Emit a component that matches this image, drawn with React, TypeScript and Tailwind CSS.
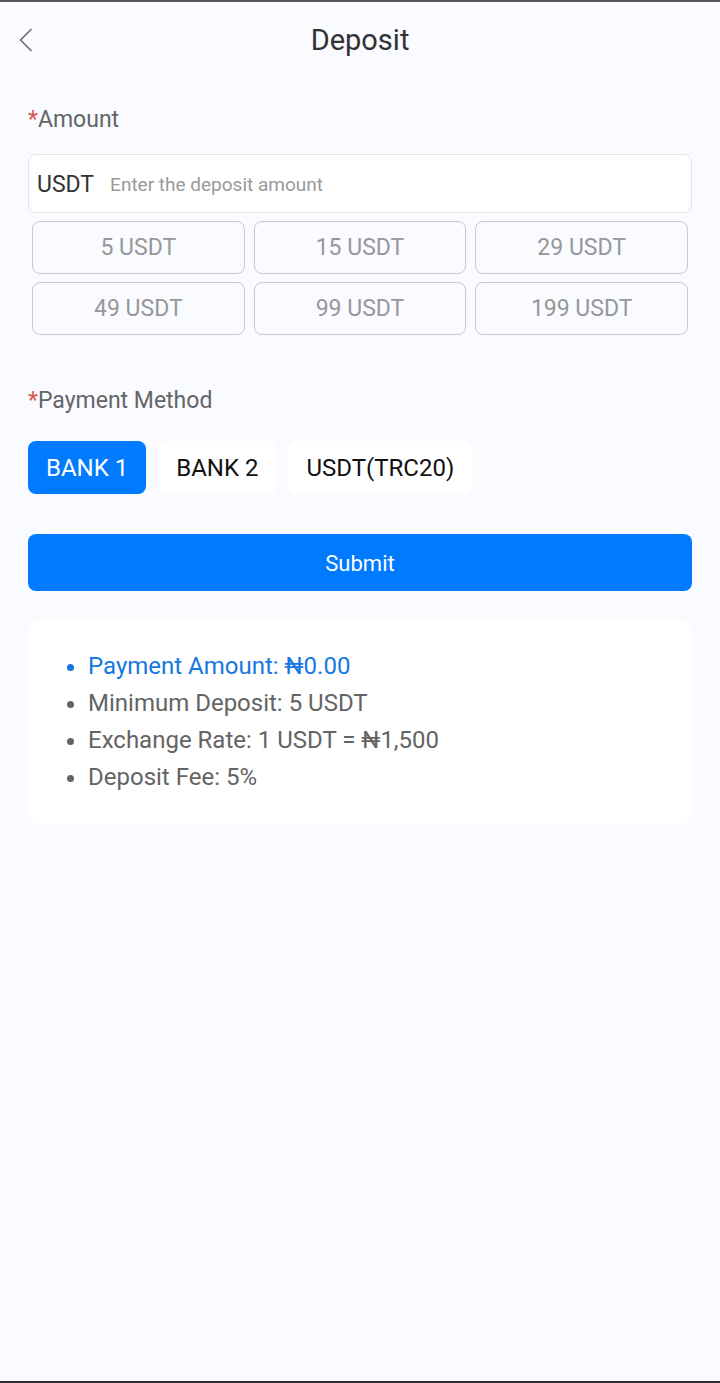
import React, { useState } from 'react';

const amounts = [5, 15, 29, 49, 99, 199];

const methods = ['BANK 1', 'BANK 2', 'USDT(TRC20)'];

const RATE = 1500;

const RequiredMark = () => <span className="text-[#d9534f]">*</span>;

const Header = () => (
  <header className="grid grid-cols-[60px_1fr_60px] items-center h-[76px]">
    <button type="button" aria-label="Back" className="h-full pl-[19px] text-[#5f6062]">
      <svg width="14" height="24" viewBox="0 0 14 24" fill="none" stroke="currentColor" strokeWidth="1.4">
        <path d="M12.5 1 1.5 12l11 11" />
      </svg>
    </button>
    <h1 className="text-center text-[29px] leading-10 text-[#323233]">Deposit</h1>
  </header>
);

const App = () => {
  const [amount, setAmount] = useState('');
  const [method, setMethod] = useState(methods[0]);

  const total = (Number(amount) || 0) * RATE;

  return (
    <div className="min-h-screen flex flex-col bg-[#fafbff] border-t-2 border-t-[#58585c] border-b-2 border-b-[#2b2b30] font-['Roboto','Noto_Sans',sans-serif]">
      <Header />

      <form className="px-7 pt-6" onSubmit={(e) => e.preventDefault()}>
        <label htmlFor="amount" className="block text-[23px] leading-9 text-[#646566]">
          <RequiredMark />Amount
        </label>

        <div className="mt-4 flex items-center gap-4 h-[59px] px-2 bg-white border border-[#e4e5ea] rounded-lg">
          <span className="pt-0.5 text-[23px] leading-9 text-[#323233]">USDT</span>
          <input
            id="amount"
            type="text"
            inputMode="decimal"
            value={amount}
            onChange={(e) => setAmount(e.target.value)}
            placeholder="Enter the deposit amount"
            className="flex-1 min-w-0 h-full pt-0.5 bg-transparent outline-none text-[19px] text-[#323233] placeholder:text-[#999999]"
          />
        </div>

        <div className="mt-2 px-1 grid grid-cols-3 gap-x-[9px] gap-y-2">
          {amounts.map((value) => (
            <button
              key={value}
              type="button"
              onClick={() => setAmount(String(value))}
              className="h-[53px] border border-[#c8c9cc] rounded-lg text-[23px] leading-9 text-[#969799]"
            >
              {value} USDT
            </button>
          ))}
        </div>

        <h2 className="mt-12 text-[23px] leading-9 text-[#646566]">
          <RequiredMark />Payment Method
        </h2>

        <div className="mt-[22px] flex flex-wrap gap-3">
          {methods.map((name) => (
            <button
              key={name}
              type="button"
              aria-pressed={name === method}
              onClick={() => setMethod(name)}
              className={`h-[53px] px-[18px] rounded-lg text-2xl ${
                name === method ? 'bg-[#007aff] text-white' : 'bg-white text-[#111111]'
              }`}
            >
              {name}
            </button>
          ))}
        </div>

        <button type="submit" className="mt-10 w-full h-[57px] pt-0.5 rounded-lg bg-[#007aff] text-[22px] text-white">
          Submit
        </button>
      </form>

      <section className="mx-7 mt-7 py-[29px] pl-[60px] pr-7 bg-white rounded-2xl">
        <ul className="list-disc text-2xl leading-[37px] text-[#646464]">
          <li className="text-[#1677e0]">Payment Amount: ₦{total.toFixed(2)}</li>
          <li>Minimum Deposit: 5 USDT</li>
          <li>Exchange Rate: 1 USDT = ₦{RATE.toLocaleString('en-US')}</li>
          <li>Deposit Fee: 5%</li>
        </ul>
      </section>
    </div>
  );
};

export default App;
